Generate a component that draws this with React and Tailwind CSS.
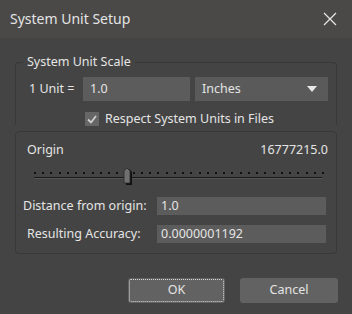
import React from "react";

function Slider() {
  const dots = [];
  const n = 36;
  for (let i = 0; i < n; i++) {
    const x = 1 + (i * 288) / (n - 1);
    dots.push(<rect key={i} x={Math.round(x)} y={5} width={2} height={2} fill="#111" />);
  }
  return (
    <svg width="296" height="20" viewBox="0 0 296 20" className="block">
      {dots}
      <rect x="1" y="10" width="288" height="1" fill="#1a1a1a" />
      <rect x="1" y="11" width="288" height="1" fill="#555" />
      <path d="M92 17 L92 4 L95 1 L98 4 L98 17 Z" fill="#111" transform="translate(1,1)" />
      <path d="M91 16 L91 4 L94 1 L97 4 L97 16 Z" fill="#707070" stroke="#2a2a2a" strokeWidth="0.8" />
    </svg>
  );
}

export default function App() {
  return (
    <div
      className="w-[352px] h-[314px] bg-[#444444] text-[#e4e4e4] flex flex-col overflow-hidden"
      style={{ fontFamily: '"Noto Sans", "Open Sans", sans-serif' }}
    >
      <div className="h-[38px] bg-[#4a4948] flex items-center justify-between pl-[10px] pr-[15px] shrink-0">
        <span className="text-[14px] leading-none">System Unit Setup</span>
        <svg width="14" height="14" viewBox="0 0 14 14">
          <path d="M1 1 L13 13 M13 1 L1 13" stroke="#e8e8e8" strokeWidth="1.2" />
        </svg>
      </div>
      <div className="flex flex-col px-[15px] pt-[16px] text-[12.5px] leading-[16px]">
        <fieldset className="border border-b-0 border-[#383838] rounded-t-[4px] h-[71px] m-0 p-0 min-w-0">
          <legend className="ml-[7px] px-[4px] leading-[16px]">System Unit Scale</legend>
          <div className="flex items-center mt-[7px] pl-[13px]">
            <span className="w-[54px]">1 Unit =</span>
            <div className="w-[107px] h-[24px] bg-[#5c5c5c] flex items-center pl-[7px]">1.0</div>
            <div className="ml-[5px] w-[133px] h-[24px] bg-[#5a5a5a] flex items-center justify-between pl-[7px] pr-[11px]">
              <span>Inches</span>
              <svg width="10" height="6" viewBox="0 0 10 6">
                <path d="M0 0 L10 0 L5 6 Z" fill="#e8e8e8" />
              </svg>
            </div>
          </div>
          <div className="flex items-center mt-[10px] pl-[69px]">
            <div className="w-[14px] h-[14px] bg-[#666666] flex items-center justify-center">
              <svg width="10" height="9" viewBox="0 0 10 9">
                <path d="M1 4.5 L4 7.5 L9 1" stroke="#d0d0d0" strokeWidth="1.8" fill="none" />
              </svg>
            </div>
            <span className="ml-[6px]">Respect System Units in Files</span>
          </div>
        </fieldset>
        <div className="mt-[6px] border border-[#383838] rounded-[4px] h-[123px] flex flex-col">
          <div className="flex justify-between items-center pl-[11px] pr-[8px] mt-[10px]">
            <span>Origin</span>
            <span>16777215.0</span>
          </div>
          <div className="pl-[17px] mt-[9px]">
            <Slider />
          </div>
          <div className="flex items-center mt-[10px]">
            <span className="w-[141px] pl-[7px]">Distance from origin:</span>
            <div className="w-[169px] h-[18px] bg-[#5c5c5c] flex items-center pl-[4px]">1.0</div>
          </div>
          <div className="flex items-center mt-[10px]">
            <span className="w-[141px] pl-[11px]">Resulting Accuracy:</span>
            <div className="w-[169px] h-[18px] bg-[#5c5c5c] flex items-center pl-[4px]">0.0000001192</div>
          </div>
        </div>
      </div>
      <div className="flex justify-end gap-[15px] pr-[14px] mt-[24px]">
        <button className="w-[97px] h-[25px] bg-[#626262] rounded-[3px] text-[12.5px] text-[#e4e4e4] relative">
          <span className="absolute inset-[1px] border border-dotted border-[#d8d8d8] rounded-[2px]" />
          OK
        </button>
        <button className="w-[98px] h-[25px] bg-[#626262] rounded-[3px] text-[12.5px] text-[#e4e4e4]">Cancel</button>
      </div>
    </div>
  );
}
